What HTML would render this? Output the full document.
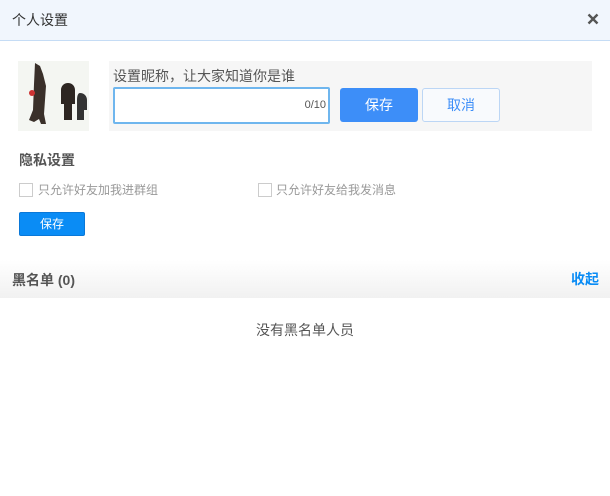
<!DOCTYPE html><html><head><meta charset="utf-8"><style>
*{margin:0;padding:0;box-sizing:border-box}
body{width:610px;height:496px;background:#fff;font-family:"Liberation Sans","Noto Sans CJK SC",sans-serif;position:relative;overflow:hidden;color:#555}
div,span{position:absolute}
.hd{left:0;top:0;width:610px;height:41px;background:#f1f6fd;border-bottom:1px solid #c5dcf5}
</style></head><body>
<div class="hd"><span style="left:12px;top:10px;font-size:14px;color:#333">个人设置</span>
<svg style="position:absolute;left:587px;top:13px" width="12" height="12" viewBox="0 0 12 12"><path d="M1.5 1.5L10.5 10.5M10.5 1.5L1.5 10.5" stroke="#555" stroke-width="2.4"/></svg></div>
<div style="left:18px;top:61px;width:71px;height:70px;background:#f4f6f2">
<svg width="71" height="70"><path d="M17 2l5 3 3 8 3 12-2 28 2 10h-5l-2-5-5 3-5-2 4-10 1-26z" fill="#3a302a"/><circle cx="14" cy="32" r="3" fill="#c33"/><path d="M50 22c4 0 7 3 7 7v14h-3v16h-8V43h-3V29c0-4 3-7 7-7z" fill="#2d2622"/><path d="M62 32c4 0 7 3 7 7v10h-3v10h-7V39c0-4 1-7 3-7z" fill="#333"/></svg></div>
<div style="left:109px;top:61px;width:483px;height:70px;background:#f6f6f6"></div>
<span style="left:113px;top:66px;font-size:14px;color:#555">设置昵称，让大家知道你是谁</span>
<div style="left:113px;top:87px;width:217px;height:37px;background:#fff;border:2px solid #6fb6ee;border-radius:2px"><span style="right:2px;top:10px;font-size:11px;color:#555">0/10</span></div>
<div style="left:340px;top:88px;width:78px;height:34px;background:#3d8ef8;border-radius:3px;color:#fff;font-size:14px;text-align:center;line-height:34px">保存</div>
<div style="left:422px;top:88px;width:78px;height:34px;background:#f8fafd;border:1px solid #bcd6f5;border-radius:3px;color:#3d8ef8;font-size:14px;text-align:center;line-height:32px">取消</div>
<span style="left:19px;top:150px;font-size:14px;font-weight:bold;color:#555">隐私设置</span>
<div style="left:19px;top:183px;width:14px;height:14px;border:1px solid #ccc;background:#fff"></div>
<span style="left:38px;top:181px;font-size:12px;color:#999">只允许好友加我进群组</span>
<div style="left:258px;top:183px;width:14px;height:14px;border:1px solid #ccc;background:#fff"></div>
<span style="left:276px;top:181px;font-size:12px;color:#999">只允许好友给我发消息</span>
<div style="left:19px;top:212px;width:66px;height:24px;background:#0a8cf5;border:1px solid #0a78d8;border-radius:2px;color:#fff;font-size:12px;text-align:center;line-height:22px">保存</div>
<div style="left:0;top:260px;width:610px;height:38px;background:linear-gradient(#fff,#f1f1f1)"></div>
<span style="left:12px;top:270px;font-size:14px;font-weight:bold;color:#555">黑名单 (0)</span>
<span style="left:571px;top:269px;font-size:14px;font-weight:bold;color:#0a8cf5">收起</span>
<span style="left:0;width:610px;text-align:center;top:320px;font-size:14px;color:#555">没有黑名单人员</span>
</body></html>
